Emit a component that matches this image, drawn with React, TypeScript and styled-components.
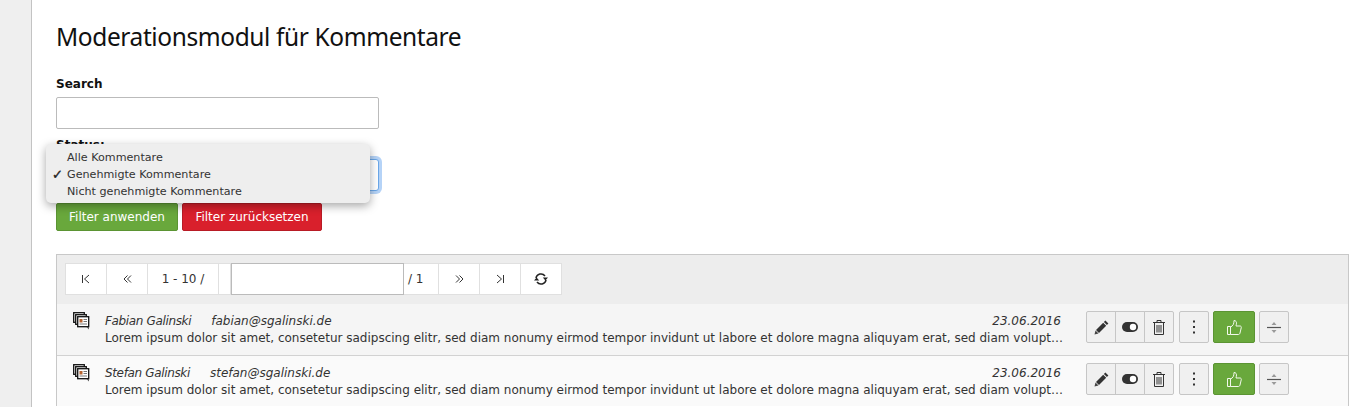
import React from 'react'
import styled, { createGlobalStyle } from 'styled-components'

const GlobalStyle = createGlobalStyle`
  html, body {
    margin: 0;
    height: 100%;
    overflow: hidden;
    background: #fff;
  }
  body {
    font-family: 'DejaVu Sans', Verdana, sans-serif;
    font-size: 12px;
    color: #333;
  }
`

const LOREM =
  'Lorem ipsum dolor sit amet, consetetur sadipscing elitr, sed diam nonumy eirmod tempor invidunt ut labore et dolore magna aliquyam erat, sed diam voluptua. At vero eos et accusam et justo duo dolores et ea rebum.'

const comments = [
  { name: 'Fabian Galinski', email: 'fabian@sgalinski.de', date: '23.06.2016' },
  { name: 'Stefan Galinski', email: 'stefan@sgalinski.de', date: '23.06.2016' },
]

const CommentIcon = () => (
  <svg width="17" height="18" viewBox="0 0 17 18">
    <rect x="0.7" y="0.7" width="10.6" height="9.6" fill="#fff" stroke="#111" strokeWidth="1.3" />
    <rect x="2.7" y="2.7" width="10.6" height="9.6" fill="#fff" stroke="#111" strokeWidth="1.3" />
    <rect x="4.7" y="4.7" width="11" height="10" fill="#fff" stroke="#111" strokeWidth="1.3" />
    <rect x="6.5" y="7" width="3" height="3.5" fill="#b5622f" />
    <path d="M10.5 7.5h3.5M10.5 9.5h3.5M6.5 12h7.5" stroke="#777" />
    <path d="M13.5 15l2.5 2.5V15z" fill="#555" />
  </svg>
)

const FirstIcon = () => (
  <svg width="10" height="10" viewBox="0 0 10 10" fill="none" stroke="#333">
    <path d="M1.5 1v8M8 1L3.5 5 8 9" />
  </svg>
)

const LastIcon = () => (
  <svg width="10" height="10" viewBox="0 0 10 10" fill="none" stroke="#333">
    <path d="M8.5 1v8M2 1l4.5 4L2 9" />
  </svg>
)

const PrevIcon = () => (
  <svg width="9" height="10" viewBox="0 0 9 10" fill="none" stroke="#333">
    <path d="M4.5 1.5L1 5l3.5 3.5M8 1.5L4.5 5 8 8.5" />
  </svg>
)

const NextIcon = () => (
  <svg width="9" height="10" viewBox="0 0 9 10" fill="none" stroke="#333">
    <path d="M1 1.5L4.5 5 1 8.5M4.5 1.5L8 5 4.5 8.5" />
  </svg>
)

const RefreshIcon = () => (
  <svg width="16" height="14" viewBox="0 0 16 14">
    <path d="M3 6.2A5 5 0 0 1 12 4M13 7.8A5 5 0 0 1 4 10" fill="none" stroke="#222" strokeWidth="1.5" />
    <path d="M9.8 5.4h5.2L12.4 8.4zM1 8.6h5.2L3.6 5.6z" fill="#222" />
  </svg>
)

const PencilIcon = () => (
  <svg width="15" height="15" viewBox="0 0 15 15">
    <path d="M11.4.6l3 3-1.5 1.5-3-3zM9.2 2.8l3 3-7.2 7.2-3-3z" fill="#333" />
    <path d="M1.5 10.5l3 3-4 1z" fill="#444" />
  </svg>
)

const ToggleIcon = () => (
  <svg width="16" height="10" viewBox="0 0 16 10">
    <rect x="0" y="0" width="16" height="10" rx="5" fill="#333" />
    <circle cx="11" cy="5" r="3.2" fill="#fff" />
  </svg>
)

const TrashIcon = () => (
  <svg width="12" height="15" viewBox="0 0 12 15" fill="none" stroke="#333">
    <path d="M0 2.5h12M4 2.5V.5h4v2M1.5 2.5v12h9v-12M4 5v7.5M6 5v7.5M8 5v7.5" />
  </svg>
)

const DotsIcon = () => (
  <svg width="4" height="14" viewBox="0 0 4 14" fill="#333">
    <rect x="1" y="0.5" width="2" height="2" />
    <rect x="1" y="6" width="2" height="2" />
    <rect x="1" y="11.5" width="2" height="2" />
  </svg>
)

const ThumbIcon = () => (
  <svg width="15" height="15" viewBox="0 0 15 15" fill="none" stroke="#f2f8ec">
    <path d="M.5 6.5h3v8h-3zM3.5 7c2.5-1 3.5-3 3.5-6.5 2 0 2.5 1.5 2.5 2.5 0 1.200-.5 2.5-.5 3h4c1 0 1.5.8 1.3 1.5l-1.3 5.5c-.2.8-.7 1.5-1.5 1.5H3.5" />
  </svg>
)

const SplitIcon = () => (
  <svg width="14" height="13" viewBox="0 0 14 13">
    <path d="M0 6.5h14" stroke="#555" strokeWidth="1.2" />
    <path d="M7 1L9.5 4h-5zM7 12L4.5 9h5z" fill="#999" />
  </svg>
)

export default function App() {
  return (
    <>
      <GlobalStyle />
      <Page>
        <Sidebar />
        <Content>
          <Title>Moderationsmodul für Kommentare</Title>
          <FieldLabel>Search</FieldLabel>
          <SearchInput />
          <StatusLabel>Status:</StatusLabel>
          <SelectArea>
            <SelectBox />
            <Menu>
              <MenuItem>Alle Kommentare</MenuItem>
              <MenuItem $checked>Genehmigte Kommentare</MenuItem>
              <MenuItem>Nicht genehmigte Kommentare</MenuItem>
            </Menu>
          </SelectArea>
          <FilterRow>
            <FilterButton $width={122} $color="#69a83c" $border="#5b9433">Filter anwenden</FilterButton>
            <FilterButton $width={140} $color="#d9202c" $border="#b81b25">Filter zurücksetzen</FilterButton>
          </FilterRow>
          <Panel>
            <Toolbar>
              <Pager>
                <PagerCell $width={41}><FirstIcon /></PagerCell>
                <PagerCell $width={41}><PrevIcon /></PagerCell>
                <PagerCell $width={71}>1 - 10 /</PagerCell>
                <PagerCell $width={12} />
                <PageInput />
                <PageCount>/ 1</PageCount>
                <PagerCell $width={41}><NextIcon /></PagerCell>
                <PagerCell $width={41}><LastIcon /></PagerCell>
                <PagerCell $width={40}><RefreshIcon /></PagerCell>
              </Pager>
            </Toolbar>
            {comments.map((c, i) => (
              <CommentRow key={c.email} $alt={i % 2 === 1}>
                <IconSlot><CommentIcon /></IconSlot>
                <CommentBody>
                  <MetaLine>
                    <Author>{c.name}</Author>
                    <span>{c.email}</span>
                    <DateText>{c.date}</DateText>
                  </MetaLine>
                  <BodyLine>{LOREM}</BodyLine>
                </CommentBody>
                <Actions>
                  <ButtonGroup>
                    <ActionButton><PencilIcon /></ActionButton>
                    <ActionButton><ToggleIcon /></ActionButton>
                    <ActionButton><TrashIcon /></ActionButton>
                  </ButtonGroup>
                  <ActionButton><DotsIcon /></ActionButton>
                  <ApproveButton><ThumbIcon /></ApproveButton>
                  <ActionButton><SplitIcon /></ActionButton>
                </Actions>
              </CommentRow>
            ))}
          </Panel>
        </Content>
      </Page>
    </>
  )
}

const Page = styled.div`
  display: flex;
  height: 407px;
  overflow: hidden;
`

const Sidebar = styled.div`
  width: 31px;
  flex: none;
  background: #efefef;
  border-right: 1px solid #c3c3c3;
`

const Content = styled.div`
  flex: 1;
  min-width: 0;
  padding: 0 14px 0 24px;
`

const Title = styled.h1`
  margin: 0 0 22px;
  padding-top: 19px;
  font-family: 'Noto Sans', 'Open Sans', sans-serif;
  font-size: 24.5px;
  line-height: 36px;
  font-weight: 400;
  color: #111;
  letter-spacing: -0.4px;
`

const FieldLabel = styled.label`
  display: block;
  font-size: 12px;
  line-height: 14px;
  height: 14px;
  font-weight: 700;
  color: #111;
  margin-bottom: 6px;
`

const StatusLabel = styled(FieldLabel)`
  margin-bottom: 7px;
`

const SearchInput = styled.div`
  box-sizing: border-box;
  width: 323px;
  height: 32px;
  border: 1px solid #bbb;
  border-radius: 2px;
  background: #fff;
  margin-bottom: 9px;
`

const SelectArea = styled.div`
  position: relative;
  width: 323px;
  height: 32px;
`

const SelectBox = styled.div`
  box-sizing: border-box;
  width: 323px;
  height: 32px;
  border: 1px solid #6aa7e8;
  border-radius: 3px;
  background: #fff;
  box-shadow: 0 0 0 3px #b5d3f7;
`

const Menu = styled.div`
  position: absolute;
  left: -10px;
  top: -15px;
  width: 324px;
  height: 59px;
  box-sizing: border-box;
  padding-top: 4.5px;
  background: #eeeeee;
  border-radius: 5px;
  box-shadow: 0 3px 10px rgba(0, 0, 0, 0.35);
`

const MenuItem = styled.div<{ $checked?: boolean }>`
  position: relative;
  padding-left: 21px;
  height: 17px;
  line-height: 17px;
  font-size: 11.15px;
  color: #333;

  ${(p) =>
    p.$checked &&
    `&::before {
      content: '✓';
      position: absolute;
      left: 6px;
      font-weight: 700;
      font-size: 13px;
      color: #222;
      -webkit-text-stroke: 0.4px #222;
    }`}
`

const FilterRow = styled.div`
  display: flex;
  gap: 4px;
  margin-top: 12px;
`

const FilterButton = styled.div<{ $width: number; $color: string; $border: string }>`
  box-sizing: border-box;
  width: ${(p) => p.$width}px;
  height: 28px;
  display: flex;
  align-items: center;
  justify-content: center;
  font-size: 12px;
  color: #fff;
  background: ${(p) => p.$color};
  border: 1px solid ${(p) => p.$border};
  border-radius: 2px;
`

const Panel = styled.div`
  margin-top: 23px;
  border: 1px solid #c8c8c8;
  border-bottom: 0;
`

const Toolbar = styled.div`
  height: 49px;
  box-sizing: border-box;
  padding: 8px;
  background: #ededed;
`

const Pager = styled.div`
  display: inline-flex;
  height: 32px;
  box-sizing: border-box;
  background: #fff;
  border: 1px solid #e0e0e0;
`

const PagerCell = styled.div<{ $width: number }>`
  width: ${(p) => p.$width}px;
  box-sizing: border-box;
  display: flex;
  align-items: center;
  justify-content: center;
  font-size: 12px;
  color: #333;
  border-right: 1px solid #e0e0e0;

  &:last-child {
    border-right: 0;
  }
`

const PageCount = styled.div`
  width: 35px;
  box-sizing: border-box;
  padding-left: 4px;
  display: flex;
  align-items: center;
  font-size: 12px;
  color: #333;
  border-right: 1px solid #e0e0e0;
`

const PageInput = styled.div`
  width: 173px;
  margin: -1px 0;
  box-sizing: border-box;
  border: 1px solid #bbb;
  background: #fff;
`

const CommentRow = styled.div<{ $alt: boolean }>`
  display: flex;
  height: 51px;
  box-sizing: border-box;
  padding: 0 59px 0 16px;
  background: ${(p) => (p.$alt ? '#fafafa' : '#f5f5f5')};
  border-top: ${(p) => (p.$alt ? '1px solid #d2d2d2' : '0')};
`

const IconSlot = styled.div`
  width: 32px;
  flex: none;
  padding-top: 8px;
`

const CommentBody = styled.div`
  width: 958px;
  flex: none;
  padding-top: 9px;
  min-width: 0;
`

const MetaLine = styled.div`
  display: flex;
  height: 17px;
  line-height: 17px;
  font-style: italic;
  font-size: 12px;
  color: #333;
`

const Author = styled.span`
  letter-spacing: -0.35px;
  margin-right: 20px;
`

const DateText = styled.span`
  margin-left: auto;
  padding-right: 2px;
`

const BodyLine = styled.div`
  height: 17px;
  line-height: 17px;
  white-space: nowrap;
  overflow: hidden;
  text-overflow: ellipsis;
  font-size: 12px;
  color: #333;
`

const Actions = styled.div`
  display: flex;
  gap: 4px;
  margin-left: 23px;
  padding-top: 7px;
  align-items: flex-start;
`

const ButtonGroup = styled.div`
  display: flex;
  margin-right: 1px;

  & > div {
    border-radius: 0;
    margin-left: -1px;
  }
  & > div:first-child {
    margin-left: 0;
    border-radius: 2px 0 0 2px;
  }
  & > div:last-child {
    border-radius: 0 2px 2px 0;
  }
`

const ActionButton = styled.div`
  box-sizing: border-box;
  width: 30px;
  height: 32px;
  display: flex;
  align-items: center;
  justify-content: center;
  background: #f0f0f0;
  border: 1px solid #c6c6c6;
  border-radius: 2px;
`

const ApproveButton = styled.div`
  box-sizing: border-box;
  width: 42px;
  height: 32px;
  display: flex;
  align-items: center;
  justify-content: center;
  background: #69a83c;
  border: 1px solid #5b9433;
  border-radius: 2px;
`
